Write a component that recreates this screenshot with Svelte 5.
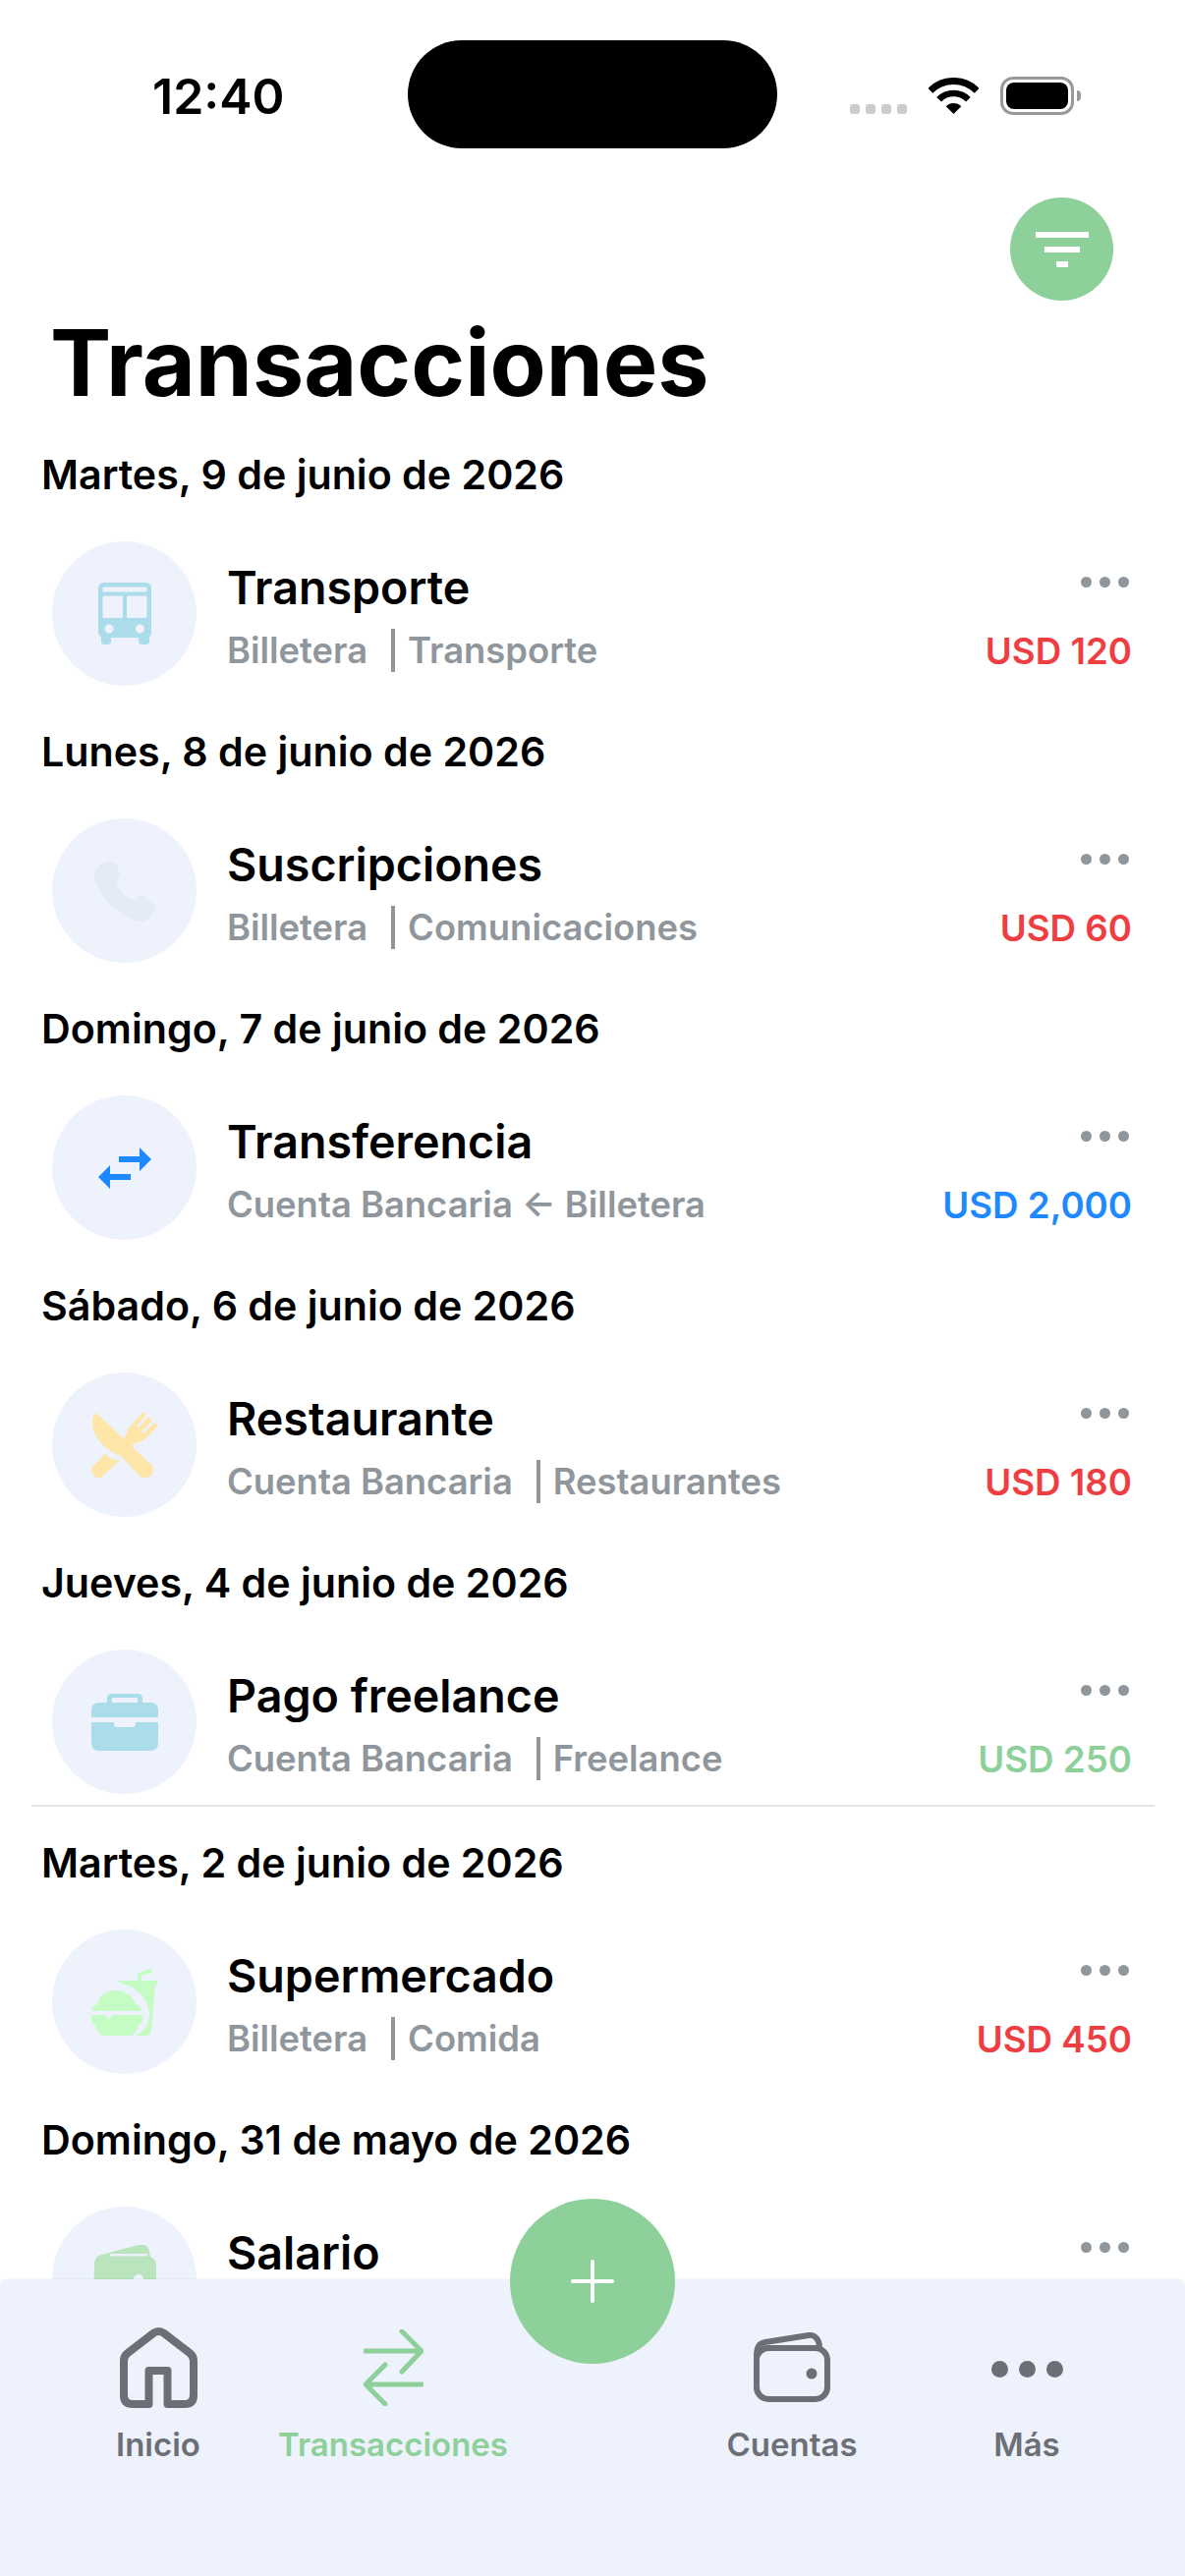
<script>
  const groups = [
    { date: 'Martes, 9 de junio de 2026', icon: 'bus', title: 'Transporte', a: 'Billetera', b: 'Transporte', amount: 'USD 120', tone: 'red' },
    { date: 'Lunes, 8 de junio de 2026', icon: 'phone', title: 'Suscripciones', a: 'Billetera', b: 'Comunicaciones', amount: 'USD 60', tone: 'red' },
    { date: 'Domingo, 7 de junio de 2026', icon: 'swap', title: 'Transferencia', plain: 'Cuenta Bancaria ← Billetera', amount: 'USD 2,000', tone: 'blue' },
    { date: 'Sábado, 6 de junio de 2026', icon: 'food', title: 'Restaurante', a: 'Cuenta Bancaria', b: 'Restaurantes', amount: 'USD 180', tone: 'red' },
    { date: 'Jueves, 4 de junio de 2026', icon: 'case', title: 'Pago freelance', a: 'Cuenta Bancaria', b: 'Freelance', amount: 'USD 250', tone: 'green', rule: true },
    { date: 'Martes, 2 de junio de 2026', icon: 'burger', title: 'Supermercado', a: 'Billetera', b: 'Comida', amount: 'USD 450', tone: 'red' },
    { date: 'Domingo, 31 de mayo de 2026', icon: 'wallet', title: 'Salario', a: 'Cuenta Bancaria', b: 'Salario', amount: 'USD 3,500', tone: 'green' }
  ];
</script>

<div class="page">
  <div class="island"></div>

  <div class="status">
    <span class="time">12:40</span>
    <div class="status-icons">
      <div class="signal"><i></i><i></i><i></i><i></i></div>
      <svg class="wifi" width="51" height="37" viewBox="0 0 51 37">
        <path d="M1.8 13.3A33.5 33.5 0 0 1 49.2 13.3" fill="none" stroke="#000" stroke-width="7" />
        <path d="M10.6 22.2A21 21 0 0 1 40.4 22.2" fill="none" stroke="#000" stroke-width="6.5" />
        <path d="M25.5 37L17.7 29.2A11 11 0 0 1 33.3 29.2Z" fill="#000" />
      </svg>
      <div class="battery"><div class="battery-fill"></div></div>
      <div class="battery-nub"></div>
    </div>
  </div>

  <header class="head">
    <button class="filter" aria-label="Filtrar">
      <i class="bar-l"></i><i class="bar-m"></i><i class="bar-s"></i>
    </button>
    <h1>Transacciones</h1>
  </header>

  <main class="list">
    {#each groups as g}
      <section class="group">
        <h2>{g.date}</h2>
        <div class="row">
          <div class="disc">
            {#if g.icon === 'bus'}
              <svg width="54" height="63" viewBox="0 0 54 63">
                <path fill="#aadcea" fill-rule="evenodd" d="M6 0H48Q54 0 54 6V50Q54 54 52 55V60Q52 63 48 63H45Q41 63 41 60V56H13V60Q13 63 9 63H6Q3 63 3 60V55Q0 54 0 50V6Q0 0 6 0ZM6 4.500Q4.500 4.500 4.500 6V8Q4.500 9.500 6 9.500H48Q49.500 9.500 49.500 8V6Q49.500 4.500 48 4.500ZM5.500 13.500Q4.500 13.500 4.500 14.500V35Q4.500 36 5.500 36H24.500Q25 36 25 35V14.500Q25 13.500 24.500 13.500ZM29.500 13.500Q29 13.500 29 14.500V35Q29 36 29.500 36H48.500Q49.500 36 49.500 35V14.500Q49.500 13.500 48.500 13.500Z" />
                <circle cx="11" cy="47" r="4.500" fill="#eef2fc" />
                <circle cx="42.500" cy="47" r="4.500" fill="#eef2fc" />
              </svg>
            {:else if g.icon === 'phone'}
              <svg width="62" height="62" viewBox="0 0 62 62">
                <path fill="#e5eaf7" d="M12 1C16-1 20 1 23 5L25 10C27 14 26 17 23 20C22 23 24 27 28 32C33 37 38 40 41 39C44 36 47 35 51 37L58 42C62 45 63 49 60 53C57 58 53 62 47 62C38 62 25 53 16 44C7 35 0 24 0 15C0 9 6 3 12 1Z" />
              </svg>
            {:else if g.icon === 'swap'}
              <svg width="54" height="42" viewBox="0 0 54 42">
                <path fill="#1e88ff" d="M21 9H42V0L54 12L42 24V15H21ZM33 27H12V18L0 30L12 42V33H33Z" />
              </svg>
            {:else if g.icon === 'food'}
              <svg width="68" height="68" viewBox="0 0 68 68">
                <g fill="#fde6a7">
                  <path d="M6 2L62 55C65 59 62 68 53 67C51 67 50 66 49 65L33 48L30 45C15 40 0 25 1 10C1 5 3 1 6 2Z" />
                  <path d="M14 43L1 56C-2 62 4 69 10 67L29 49C22 49 18 47 14 43Z" />
                  <path d="M32 28C36 25 36 19 39 15L53 0L56 3L46 14L48 16L58 5L62 9L51 20L53 22L64 11L68 14L54 28C50 32 44 31 40 35Z" />
                </g>
              </svg>
            {:else if g.icon === 'case'}
              <svg width="68" height="58" viewBox="0 0 68 58">
                <g fill="#aadcea">
                  <path fill-rule="evenodd" d="M21 0H47Q52 0 52 5V9H60Q68 9 68 17V24H0V17Q0 9 8 9H16V5Q16 0 21 0ZM22 4Q21 4 21 5V9H47V5Q47 4 46 4Z" />
                  <path d="M0 29H23V31Q23 34 26 34H42Q45 34 45 31V29H68V50Q68 58 60 58H8Q0 58 0 50Z" />
                </g>
              </svg>
            {:else if g.icon === 'burger'}
              <svg width="68" height="68" viewBox="0 0 68 68">
                <g fill="#c4fcc4">
                  <path d="M1 43C1 39 3 37 6 36C8 27 16 22 25 22C34 22 42 27 45 36C48 37 51 39 51 43Z" />
                  <path d="M0 47H14L18 51L22 47H52V52C52 55 50 56 48 57C47 63 44 68 38 68H14C8 68 5 63 4 57C2 56 0 54 0 52Z" />
                  <path d="M38 17H65L61 63C61 66 58 68 55 68H46C54 63 59 56 59 47C59 34 50 23 38 17Z" />
                  <path d="M27 12H68L66 17H38C32 16 28 14 27 12Z" />
                </g>
                <path d="M49 13V8C49 5 52 4 60 2" fill="none" stroke="#c4fcc4" stroke-width="4" stroke-linecap="round" />
              </svg>
            {:else}
              <svg width="64" height="70" viewBox="0 0 64 70">
                <path fill="#b9e4bd" d="M1 20C1 14 4 11 8 10L46 0C52-1 56 1 57 7L58 12Q64 14 64 22V60Q64 70 54 70H10Q0 70 0 60Z" />
                <rect x="17" y="9" width="38" height="2.500" fill="#eef2fc" />
                <circle cx="46" cy="35" r="5" fill="#eef2fc" />
              </svg>
            {/if}
          </div>

          <div class="copy">
            <div class="name">{g.title}</div>
            <div class="sub">
              {#if g.plain}
                {g.plain}
              {:else}
                <span>{g.a}</span><i class="sep"></i><span>{g.b}</span>
              {/if}
            </div>
          </div>

          <div class="side">
            <div class="more"><i></i><i></i><i></i></div>
            <div class="amount {g.tone}">{g.amount}</div>
          </div>
        </div>
        {#if g.rule}<hr class="rule" />{/if}
      </section>
    {/each}
  </main>

  <nav class="nav">
    <button class="fab" aria-label="Agregar">
      <svg width="44" height="44" viewBox="0 0 44 44">
        <path d="M22 2V42M2 22H42" stroke="#fff" stroke-width="4" stroke-linecap="round" fill="none" />
      </svg>
    </button>

    <div class="tab">
      <div class="tab-icon">
        <svg width="79" height="83" viewBox="0 0 79 83">
          <path d="M34 7Q39.500 3 45 7L71 27Q75 30 75 35V70Q75 79 66 79H48.500V45H29.500V79H13Q4 79 4 70V35Q4 30 8 27Z" fill="none" stroke="#6c7076" stroke-width="8" stroke-linejoin="round" />
        </svg>
      </div>
      <span>Inicio</span>
    </div>

    <div class="tab active">
      <div class="tab-icon">
        <svg width="61" height="78" viewBox="0 0 61 78">
          <path d="M2 22H58M39 2L59 22L39 43M59 56H3M22 36L2 56L22 76" fill="none" stroke="#8dd09a" stroke-width="5" stroke-linecap="round" stroke-linejoin="round" />
        </svg>
      </div>
      <span>Transacciones</span>
    </div>

    <div class="slot"></div>

    <div class="tab">
      <div class="tab-icon">
        <svg width="78" height="71" viewBox="0 0 78 71">
          <path d="M3 24C3 14 6 11 12 10L56 3C62 2 67 7 67 16" fill="none" stroke="#6c7076" stroke-width="6" stroke-linecap="round" />
          <rect x="3" y="16" width="72" height="52" rx="12" fill="none" stroke="#6c7076" stroke-width="6" />
          <circle cx="59" cy="42" r="5.500" fill="#6c7076" />
        </svg>
      </div>
      <span>Cuentas</span>
    </div>

    <div class="tab">
      <div class="tab-icon dots"><i></i><i></i><i></i></div>
      <span>Más</span>
    </div>
  </nav>
</div>

<style>
  :global(body) {
    margin: 0;
    background: #fff;
  }

  .page {
    position: relative;
    width: 1206px;
    height: 2622px;
    overflow: hidden;
    display: flex;
    flex-direction: column;
    background: #fff;
    color: #000;
    font-family: Inter, 'Noto Sans', sans-serif;
  }

  .island {
    position: absolute;
    left: 415px;
    top: 41px;
    width: 376px;
    height: 110px;
    border-radius: 55px;
    background: #000;
  }

  .status {
    flex: none;
    height: 150px;
    padding: 0 106px 0 155px;
    box-sizing: border-box;
    display: flex;
    justify-content: space-between;
  }

  .time {
    margin-top: 68px;
    font-size: 50px;
    line-height: 60px;
    font-weight: 600;
  }

  .status-icons {
    display: flex;
    align-items: flex-start;
    margin-top: 78px;
  }

  .signal {
    display: flex;
    gap: 6px;
    margin-top: 28px;
    margin-right: 22px;
  }

  .signal i {
    width: 10px;
    height: 10px;
    border-radius: 3px;
    background: #c9cbce;
  }

  .wifi {
    margin-top: 1px;
    margin-right: 22px;
  }

  .battery {
    width: 75px;
    height: 39px;
    box-sizing: border-box;
    padding: 3px;
    border: 3px solid #97999c;
    border-radius: 13px;
  }

  .battery-fill {
    height: 100%;
    border-radius: 8px;
    background: #000;
  }

  .battery-nub {
    width: 4px;
    height: 11px;
    margin: 14px 0 0 3px;
    border-radius: 0 4px 4px 0;
    background: #97999c;
  }

  .head {
    flex: none;
    display: flex;
    flex-direction: column;
  }

  .filter {
    align-self: flex-end;
    width: 105px;
    height: 105px;
    margin: 51px 73px 0 0;
    padding: 0;
    border: 0;
    border-radius: 50%;
    background: #8dd09a;
    display: flex;
    flex-direction: column;
    align-items: center;
    justify-content: center;
    gap: 9px;
  }

  .filter i {
    display: block;
    height: 6px;
    background: #fff;
  }

  .bar-l { width: 54px; }
  .bar-m { width: 36px; }
  .bar-s { width: 12px; }

  h1 {
    margin: 9px 0 0 51px;
    font-size: 93.3px;
    line-height: 110px;
    font-weight: 700;
  }

  .list {
    flex: 1;
    min-height: 0;
    overflow: hidden;
    padding-top: 30px;
  }

  .group {
    padding-bottom: 39px;
  }

  h2 {
    margin: 0 0 40px 42px;
    font-size: 41.2px;
    line-height: 56px;
    font-weight: 600;
  }

  .row {
    display: flex;
    margin: 0 54px 0 53px;
    height: 147px;
  }

  .disc {
    flex: none;
    width: 147px;
    height: 147px;
    border-radius: 50%;
    background: #eef2fc;
    display: flex;
    align-items: center;
    justify-content: center;
  }

  .copy {
    flex: 1;
    margin-left: 31px;
    padding-top: 19px;
  }

  .name {
    font-size: 46.6px;
    line-height: 56px;
    font-weight: 600;
  }

  .sub {
    margin-top: 13px;
    display: flex;
    align-items: center;
    white-space: pre;
    font-size: 36.4px;
    line-height: 46px;
    font-weight: 560;
    color: #8f969c;
  }

  .sep {
    width: 4px;
    height: 44px;
    margin: 0 13px 0 24px;
    background: #8f969c;
  }

  .side {
    display: flex;
    flex-direction: column;
    align-items: flex-end;
    padding-top: 36px;
  }

  .more {
    display: flex;
    gap: 8px;
    margin-right: 3px;
  }

  .more i {
    width: 11px;
    height: 11px;
    border-radius: 50%;
    background: #8f969c;
  }

  .amount {
    margin-top: 42px;
    font-size: 36.7px;
    line-height: 46px;
    font-weight: 600;
  }

  .red { color: #ef3e42; }
  .blue { color: #1e88ff; }
  .green { color: #8dd09a; }

  .rule {
    height: 2px;
    margin: 11px 31px -10px 32px;
    border: 0;
    background: #e5e5e5;
  }

  .nav {
    flex: none;
    position: absolute;
    left: 0;
    right: 0;
    bottom: 0;
    height: 302px;
    padding: 0 41.5px;
    display: grid;
    grid-template-columns: 239px 239px 167px 239px 239px;
    align-items: start;
    background: #eef2fc;
    border-radius: 8px 8px 0 0;
    box-shadow: 0 -1px 2px rgba(0, 0, 0, 0.04);
  }

  .fab {
    position: absolute;
    left: 519px;
    top: -82px;
    width: 168px;
    height: 168px;
    padding: 0;
    border: 0;
    border-radius: 50%;
    background: #8dd09a;
    display: flex;
    align-items: center;
    justify-content: center;
  }

  .tab {
    display: flex;
    flex-direction: column;
    align-items: center;
    font-size: 33px;
    line-height: 40px;
    font-weight: 600;
    color: #6c7076;
  }

  .tab-icon {
    height: 83px;
    margin-top: 48px;
    margin-bottom: 17px;
    display: flex;
    align-items: center;
    justify-content: center;
  }

  .active {
    color: #8dd09a;
  }

  .dots {
    gap: 11px;
    padding-top: 3px;
    box-sizing: border-box;
  }

  .dots i {
    width: 17px;
    height: 17px;
    border-radius: 50%;
    background: #6c7076;
  }
</style>
